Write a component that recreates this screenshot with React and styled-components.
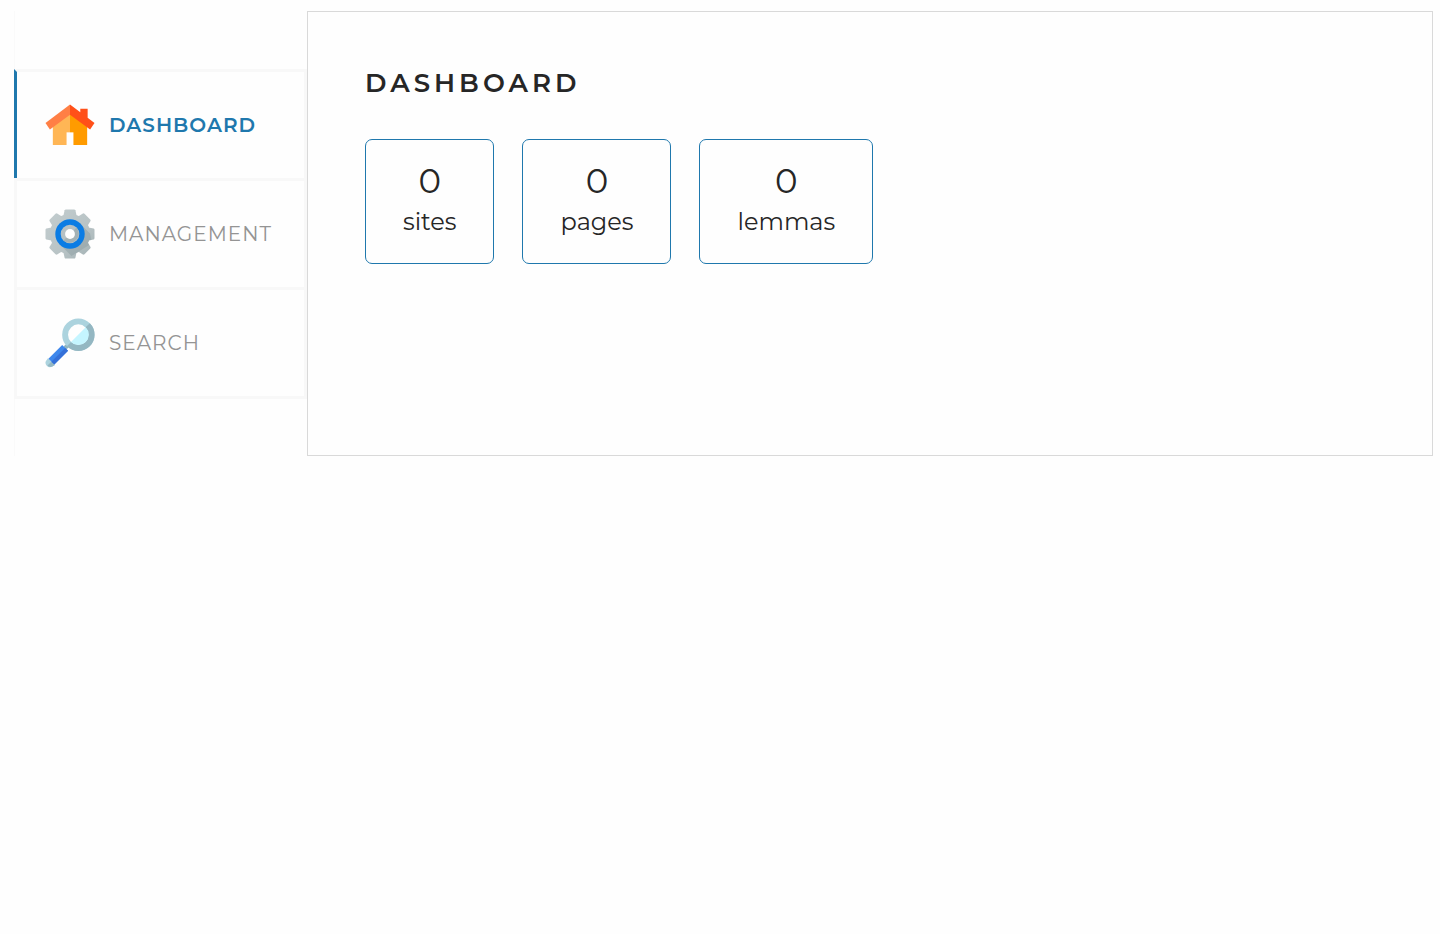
import React, { useState } from "react";
import styled, { createGlobalStyle } from "styled-components";

const GlobalStyle = createGlobalStyle`
  *, *::before, *::after { box-sizing: border-box; }
  body {
    margin: 0;
    background: #fefefe;
    color: #262626;
    font-family: Montserrat, Inter, "Liberation Sans", sans-serif;
  }
`;

const Page = styled.div`
  display: flex;
  padding: 11px 7px 11px 14px;
`;

const Sidebar = styled.aside`
  flex: 0 0 293px;
  padding-top: 58px;
  border-left: 1px solid #fafafa;
`;

const Tabs = styled.nav`
  display: flex;
  flex-direction: column;
  margin-left: -1px;
  border-bottom: 3px solid #f8f8f8;
`;

const Tab = styled.a`
  display: flex;
  align-items: center;
  gap: 14px;
  height: 109px;
  padding-left: 28px;
  border: 3px solid #f8f8f8;
  border-bottom: 0;
  border-left-color: ${({ $active }) => ($active ? "#1f78ad" : "#f8f8f8")};
  color: ${({ $active }) => ($active ? "#1f78ad" : "#949494")};
  font-size: 20px;
  font-weight: ${({ $active }) => ($active ? 600 : 400)};
  letter-spacing: 1px;
  line-height: 24px;
  text-decoration: none;
  text-transform: uppercase;
`;

const Icon = styled.svg`
  flex: none;
  width: 50px;
  height: 50px;
`;

const Panel = styled.main`
  flex: 1;
  min-width: 0;
  min-height: 445px;
  padding: 55px 57px;
  border: 1px solid #d9d9d9;
`;

const Title = styled.h1`
  margin: 0 0 40px;
  font-size: 26px;
  font-weight: 600;
  line-height: 32px;
  letter-spacing: 4px;
  text-transform: uppercase;
`;

const Stats = styled.div`
  display: flex;
  flex-wrap: wrap;
  gap: 28px;
`;

const Stat = styled.div`
  padding: 20px 37px 21px;
  border: 1px solid #1f78ad;
  border-radius: 7px;
  text-align: center;
`;

const Value = styled.div`
  font-size: 34px;
  line-height: 42px;
`;

const Label = styled.div`
  font-size: 24px;
  line-height: 40px;
`;

const House = () => (
  <Icon viewBox="0 0 51 51" aria-hidden="true">
    <path d="M8 24L25.500 10V46H22V32.500H22V46H8Z" fill="#ffb655" />
    <path d="M25.500 10L43 24V46H25.500Z" fill="#ff9b00" />
    <path d="M22 33H29V47H22Z" fill="#fefefe" />
    <path d="M25.500 4.500L0.500 23.500L5 30L25.500 15Z" fill="#ff7f45" />
    <path d="M25.500 4.500L36 12.500V9H43.500V18L50.500 23.500L46 30L25.500 15Z" fill="#ff5019" />
  </Icon>
);

const teeth = [0, 45, 90, 135, 180, 225, 270, 315];

const Gear = () => (
  <Icon viewBox="0 0 51 51" aria-hidden="true">
    <defs>
      <linearGradient id="gear-metal" x1="0" y1="0" x2="1" y2="1">
        <stop offset="0" stopColor="#c3cdcf" />
        <stop offset="0.6" stopColor="#b8c3c5" />
        <stop offset="1" stopColor="#a2b0b3" />
      </linearGradient>
    </defs>
    <mask id="gear-shape">
      <circle cx="25.500" cy="25.500" r="20.500" fill="#fff" />
      {teeth.map((angle) => (
        <path
          key={angle}
          d="M18.500 8L20 1.400Q20.300 0.500 21.400 0.500H29.600Q30.700 0.500 31 1.400L32.500 8Z"
          transform={`rotate(${angle} 25.500 25.500)`}
          fill="#fff"
        />
      ))}
    </mask>
    <rect width="51" height="51" fill="url(#gear-metal)" mask="url(#gear-shape)" />
    <path d="M36 15L46 25L48 35L27 48L15 36Z" fill="#8fa0a4" opacity="0.5" mask="url(#gear-shape)" />
    <circle cx="25.500" cy="25.500" r="15" fill="#0a7ce4" />
    <circle cx="25.500" cy="25.500" r="9.500" fill="#b6c1c4" />
    <path d="M18.800 32.200A9.500 9.500 0 0 0 32.200 18.800Z" fill="#a3b1b4" />
    <circle cx="25.500" cy="25.500" r="5" fill="#fefefe" />
  </Icon>
);

const Magnifier = () => (
  <Icon viewBox="0 0 51 51" aria-hidden="true">
    <path d="M20 28L23 31" stroke="#8fb4c0" strokeWidth="3" />
    <path d="M19 32L23.500 27.500" stroke="#91b5c1" strokeWidth="3" />
    <circle cx="34" cy="17" r="13.500" fill="#fefefe" stroke="#acd3de" strokeWidth="6" />
    <path d="M43.600 7.400A13.500 13.500 0 0 1 24.400 26.600" fill="none" stroke="#94b7c2" strokeWidth="6" />
    <path d="M41.500 9.500A10.500 10.500 0 0 1 26.500 24.500Z" fill="#c5f5ff" />
    <path d="M3 41L10 48L7.500 49.500A4.500 4.500 0 0 1 1.500 43Z" fill="#acd3de" />
    <path d="M6.500 44.500L10 48L7.500 49.500A4.500 4.500 0 0 1 2.500 48.500Z" fill="#94b7c2" />
    <path d="M17.500 27.500L23.500 33.500L9.500 47.500L3.500 41.500Z" fill="#3d87ec" />
    <path d="M20.500 30.500L23.500 33.500L9.500 47.500L6.500 44.500Z" fill="#3570d8" />
  </Icon>
);

const tabs = [
  { id: "dashboard", label: "Dashboard", Picture: House },
  { id: "management", label: "Management", Picture: Gear },
  { id: "search", label: "Search", Picture: Magnifier },
];

const stats = [
  { label: "sites", value: 0 },
  { label: "pages", value: 0 },
  { label: "lemmas", value: 0 },
];

export default function App() {
  const [active, setActive] = useState("dashboard");
  const current = tabs.find((tab) => tab.id === active);

  return (
    <>
      <GlobalStyle />
      <Page>
        <Sidebar>
          <Tabs>
            {tabs.map(({ id, label, Picture }) => (
              <Tab
                key={id}
                href={`#${id}`}
                $active={id === active}
                aria-current={id === active ? "page" : undefined}
                onClick={() => setActive(id)}
              >
                <Picture />
                <span>{label}</span>
              </Tab>
            ))}
          </Tabs>
        </Sidebar>
        <Panel>
          <Title>{current.label}</Title>
          {active === "dashboard" && (
            <Stats>
              {stats.map(({ label, value }) => (
                <Stat key={label}>
                  <Value>{value}</Value>
                  <Label>{label}</Label>
                </Stat>
              ))}
            </Stats>
          )}
        </Panel>
      </Page>
    </>
  );
}
